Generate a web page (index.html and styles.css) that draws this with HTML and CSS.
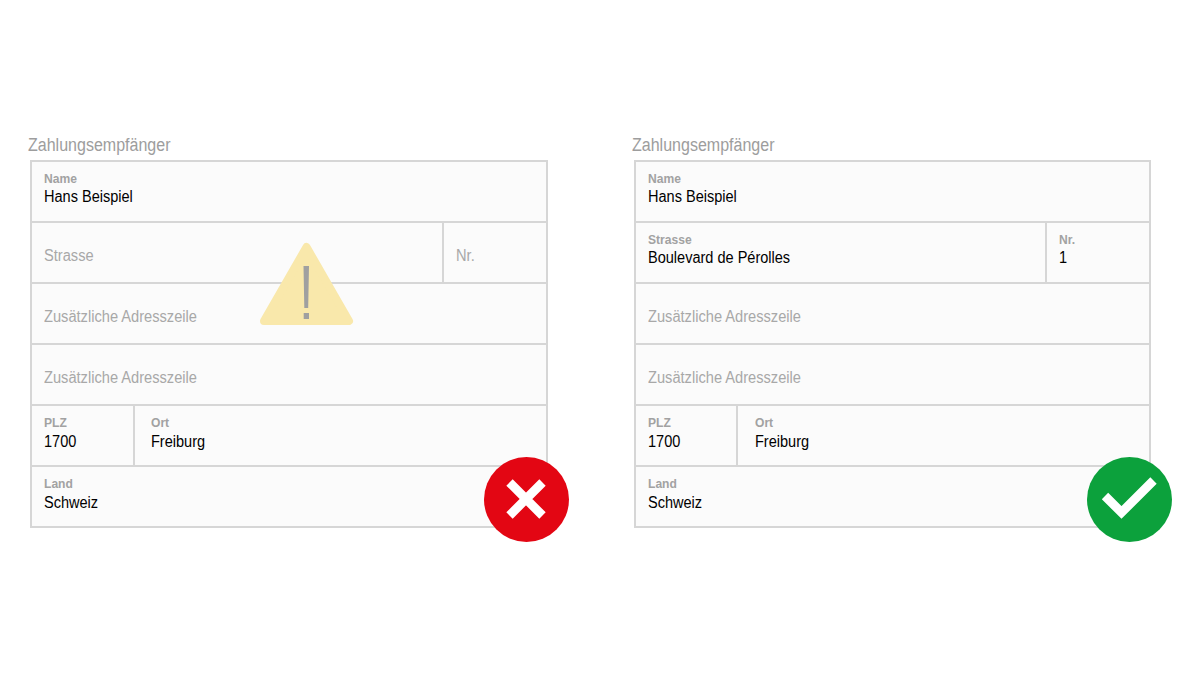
FILE: index.html
```html
<!DOCTYPE html>
<html lang="de">
<head>
<meta charset="utf-8">
<title>Zahlungsempfänger</title>
<link rel="stylesheet" href="styles.css">
</head>
<body>
<main class="page">
  <section class="panel">
    <h2 class="title">Zahlungsempfänger</h2>
    <div class="form">
      <div class="row"><div class="cell"><span class="label">Name</span><span class="value">Hans Beispiel</span></div></div>
      <div class="row"><div class="cell"><span class="placeholder">Strasse</span></div><div class="cell nr"><span class="placeholder">Nr.</span></div></div>
      <div class="row"><div class="cell"><span class="placeholder">Zusätzliche Adresszeile</span></div></div>
      <div class="row"><div class="cell"><span class="placeholder">Zusätzliche Adresszeile</span></div></div>
      <div class="row"><div class="cell plz"><span class="label">PLZ</span><span class="value">1700</span></div><div class="cell"><span class="label">Ort</span><span class="value">Freiburg</span></div></div>
      <div class="row"><div class="cell"><span class="label">Land</span><span class="value">Schweiz</span></div></div>
      <svg class="warning" viewBox="0 0 95 84" aria-hidden="true">
        <path d="M47.5 5 L90 79 H5 Z" fill="#f9e8ab" stroke="#f9e8ab" stroke-width="8" stroke-linejoin="round"/>
        <path d="M44.5 24 H50 L49.2 66 H45.3 Z M44.7 71 H50 V77 H44.7 Z" fill="#a0a0a0"/>
      </svg>
    </div>
    <svg class="badge" viewBox="0 0 85 85" aria-hidden="true">
      <circle cx="42.5" cy="42.5" r="42.5" fill="#e30613"/>
      <path d="M25.5 25.5 L58.5 58.5 M58.5 25.5 L25.5 58.5" stroke="#fff" stroke-width="9" fill="none"/>
    </svg>
  </section>
  <section class="panel panel-ok">
    <h2 class="title">Zahlungsempfänger</h2>
    <div class="form">
      <div class="row"><div class="cell"><span class="label">Name</span><span class="value">Hans Beispiel</span></div></div>
      <div class="row"><div class="cell"><span class="label">Strasse</span><span class="value">Boulevard de Pérolles</span></div><div class="cell nr"><span class="label">Nr.</span><span class="value">1</span></div></div>
      <div class="row"><div class="cell"><span class="placeholder">Zusätzliche Adresszeile</span></div></div>
      <div class="row"><div class="cell"><span class="placeholder">Zusätzliche Adresszeile</span></div></div>
      <div class="row"><div class="cell plz"><span class="label">PLZ</span><span class="value">1700</span></div><div class="cell"><span class="label">Ort</span><span class="value">Freiburg</span></div></div>
      <div class="row"><div class="cell"><span class="label">Land</span><span class="value">Schweiz</span></div></div>
    </div>
    <svg class="badge" viewBox="0 0 85 85" aria-hidden="true">
      <circle cx="42.5" cy="42.5" r="42.5" fill="#0ca13c"/>
      <path d="M18 39 L34.5 55.5 L66.5 23.5" stroke="#fff" stroke-width="9" fill="none"/>
    </svg>
  </section>
</main>
</body>
</html>
```
FILE: styles.css
```css
html, body {
  margin: 0;
  padding: 0;
  background: #fff;
}
.page {
  width: 1200px;
  height: 675px;
  box-sizing: border-box;
  padding: 134px 0 0 30px;
  display: flex;
  gap: 86px;
  font-family: "Liberation Sans", Arial, sans-serif;
}
.panel {
  position: relative;
  width: 518px;
}
.panel-ok {
  width: 517px;
}
.title {
  margin: 0 0 4px -2px;
  font-size: 18px;
  line-height: 22px;
  font-weight: 400;
  color: #9d9d9d;
  transform: scaleX(0.89);
  transform-origin: left center;
}
.form {
  position: relative;
  box-sizing: border-box;
  height: 368px;
  border: 2px solid #d6d6d6;
  border-bottom: 0;
  background: #fbfbfb;
  display: flex;
  flex-direction: column;
}
.row {
  flex: 0 0 61px;
  box-sizing: border-box;
  border-bottom: 2px solid #d6d6d6;
  display: flex;
}
.cell {
  flex: 1;
  box-sizing: border-box;
  padding: 0 12px 4px;
  display: flex;
  flex-direction: column;
  justify-content: center;
}
.row:nth-child(n+5) .cell {
  padding-top: 1px;
}
.row:nth-child(n+5) .label {
  margin-bottom: 2px;
}
.nr {
  flex: 0 0 104px;
  border-left: 2px solid #d6d6d6;
}
.plz {
  flex: 0 0 103px;
  border-right: 2px solid #d6d6d6;
}
.plz + .cell {
  padding-left: 16px;
}
.panel-ok .plz {
  flex-basis: 102px;
}
.panel-ok .plz + .cell {
  padding-left: 17px;
}
.label {
  margin-bottom: 1px;
  font-size: 13px;
  line-height: 13px;
  font-weight: 700;
  color: #a2a2a2;
  transform: scaleX(0.93);
  transform-origin: left center;
}
.value {
  font-size: 16px;
  line-height: 21px;
  color: #000;
  transform: scaleX(0.908);
  transform-origin: left center;
}
.placeholder {
  font-size: 16px;
  line-height: 21px;
  color: #a8a8a8;
  position: relative;
  top: 5px;
  transform: scaleX(0.915);
  transform-origin: left center;
}
.warning {
  position: absolute;
  left: 227px;
  top: 80px;
  width: 95px;
  height: 84px;
}
.badge {
  position: absolute;
  right: -21px;
  top: 323px;
  width: 85px;
  height: 85px;
}
```
